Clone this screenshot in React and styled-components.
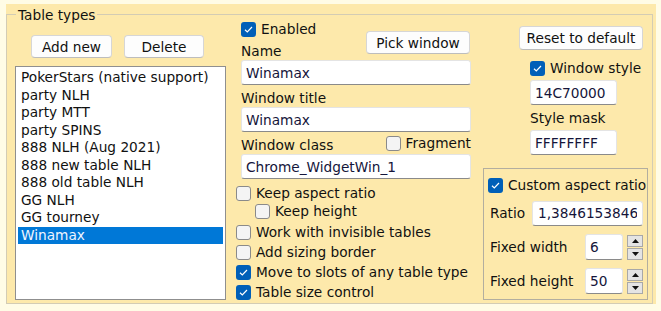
import styled, { createGlobalStyle } from "styled-components";

const GlobalStyle = createGlobalStyle`
  html, body {
    margin: 0;
    padding: 0;
    background: #fffce6;
  }
  body {
    font-family: "DejaVu Sans", Tahoma, sans-serif;
    font-size: 13.7px;
    color: #111;
  }
`;

const tableTypes = [
  "PokerStars (native support)",
  "party NLH",
  "party MTT",
  "party SPINS",
  "888 NLH (Aug 2021)",
  "888 new table NLH",
  "888 old table NLH",
  "GG NLH",
  "GG tourney",
  "Winamax",
];

const Check = ({ checked }) => (
  <Box $checked={checked}>
    {checked && (
      <svg width="15" height="15" viewBox="0 0 15 15">
        <path d="M4 7.8 L6.3 10 L11 5" fill="none" stroke="#fff" strokeWidth="1.2" />
      </svg>
    )}
  </Box>
);

const Spinner = () => (
  <Spin>
    <SpinBtn>
      <svg width="7" height="4" viewBox="0 0 7 4">
        <polygon points="0,4 7,4 3.5,0" fill="#111" />
      </svg>
    </SpinBtn>
    <SpinBtn>
      <svg width="7" height="4" viewBox="0 0 7 4">
        <polygon points="0,0 7,0 3.5,4" fill="#111" />
      </svg>
    </SpinBtn>
  </Spin>
);

const App = () => {
  return (
    <>
      <GlobalStyle />
      <Panel>
        <Frame>
          <Legend>Table types</Legend>

          <LeftCol>
            <ButtonRow>
              <Button $w={81}>Add new</Button>
              <Button $w={80}>Delete</Button>
            </ButtonRow>
            <ListBox>
              {tableTypes.map((t) => (
                <Item key={t} $selected={t === "Winamax"}>
                  {t}
                </Item>
              ))}
            </ListBox>
          </LeftCol>

          <MidCol>
            <Header>
              <div>
                <CheckRow $indent={5} $h={18}>
                  <Check checked />
                  Enabled
                </CheckRow>
                <Label>Name</Label>
              </div>
              <Button $w={104} $top={11}>Pick window</Button>
            </Header>
            <Field $w={230} value="Winamax" readOnly />
            <Label>Window title</Label>
            <Field $w={230} value="Winamax" readOnly />
            <SplitRow>
              <Label>Window class</Label>
              <CheckRow $h={22}>
                <Check />
                Fragment
              </CheckRow>
            </SplitRow>
            <Field $w={230} value="Chrome_WidgetWin_1" readOnly />
            <CheckRow $top={4}>
              <Check />
              Keep aspect ratio
            </CheckRow>
            <CheckRow $indent={19} $h={16}>
              <Check />
              Keep height
            </CheckRow>
            <CheckRow $top={3}>
              <Check />
              Work with invisible tables
            </CheckRow>
            <CheckRow>
              <Check />
              Add sizing border
            </CheckRow>
            <CheckRow>
              <Check checked />
              Move to slots of any table type
            </CheckRow>
            <CheckRow>
              <Check checked />
              Table size control
            </CheckRow>
          </MidCol>

          <RightCol>
            <Button $w={124} $h={24} $left={36}>Reset to default</Button>
            <CheckRow $indent={47} $top={8}>
              <Check checked />
              Window style
            </CheckRow>
            <Field $w={87} $left={47} $top={2} value="14C70000" readOnly />
            <Label $h={25} $left={47}>Style mask</Label>
            <Field $w={87} $left={47} value="FFFFFFFF" readOnly />

            <AspectBox>
              <CheckRow $indent={4} $h={18} $top={7}>
                <Check checked />
                Custom aspect ratio
              </CheckRow>
              <FormRow $top={7} $h={24}>
                <RowLabel $w={37}>Ratio</RowLabel>
                <Field $w={111} $pad={5} value="1,38461538461538" readOnly />
              </FormRow>
              <FormRow $top={9} $h={26}>
                <RowLabel $w={90}>Fixed width</RowLabel>
                <Field $w={38} $h={26} value="6" readOnly />
                <Spinner />
              </FormRow>
              <FormRow $top={8} $h={26}>
                <RowLabel $w={90}>Fixed height</RowLabel>
                <Field $w={38} $h={26} value="50" readOnly />
                <Spinner />
              </FormRow>
            </AspectBox>
          </RightCol>
        </Frame>
      </Panel>
    </>
  );
};

export default App;

const Panel = styled.div`
  margin: 4px 0 0 6px;
  width: 650px;
  height: 300px;
  box-sizing: border-box;
  padding: 10px 3px 0 0;
  background: #fde9ab;
`;

const Frame = styled.div`
  position: relative;
  height: 290px;
  box-sizing: border-box;
  border: 1px solid #d3ccb4;
  padding-left: 8px;
  display: flex;
`;

const Legend = styled.div`
  position: absolute;
  left: 9px;
  top: -10px;
  padding: 0 2px;
  line-height: 20px;
  background: #fde9ab;
`;

const LeftCol = styled.div`
  width: 211px;
  display: flex;
  flex-direction: column;
`;

const ButtonRow = styled.div`
  display: flex;
  gap: 12px;
  margin-top: 20px;
  padding-left: 16px;
`;

const Button = styled.button`
  width: ${(p) => p.$w}px;
  height: ${(p) => p.$h || 23}px;
  margin-top: ${(p) => p.$top || 0}px;
  margin-left: ${(p) => p.$left || 0}px;
  box-sizing: border-box;
  padding: 0;
  border: 1px solid #d6d6d6;
  border-bottom-color: #bdbdbd;
  border-radius: 4px;
  background: #fdfdfd;
  font: inherit;
  color: #111;
  flex-shrink: 0;
`;

const ListBox = styled.div`
  margin-top: 8px;
  height: 234px;
  box-sizing: border-box;
  border: 1px solid #8f8f8f;
  background: #fff;
  padding: 2px 2px 0;
`;

const Item = styled.div`
  line-height: 17.5px;
  padding-left: 3px;
  white-space: nowrap;
  background: ${(p) => (p.$selected ? "#0078d7" : "transparent")};
  color: ${(p) => (p.$selected ? "#eef5ff" : "#111")};
`;

const MidCol = styled.div`
  width: 235px;
  margin-left: 10px;
  padding-top: 5px;
  display: flex;
  flex-direction: column;
`;

const Header = styled.div`
  display: flex;
  justify-content: space-between;
  height: 40px;
  margin-right: 1px;
`;

const SplitRow = styled.div`
  display: flex;
  justify-content: space-between;
  align-items: flex-start;
`;

const Label = styled.div`
  height: ${(p) => p.$h || 22}px;
  box-sizing: border-box;
  padding-top: 5px;
  padding-left: ${(p) => (p.$left ?? 5)}px;
  line-height: 17px;
  white-space: nowrap;
`;

const Field = styled.input`
  width: ${(p) => p.$w}px;
  height: ${(p) => p.$h || 25}px;
  margin: ${(p) => p.$top || 0}px 0 0 ${(p) => (p.$left ?? 5)}px;
  box-sizing: border-box;
  padding: 0 ${(p) => p.$pad || 4}px;
  border: 1px solid #e4e4e4;
  border-bottom: 1px solid #8a8a8a;
  border-radius: 3px;
  background: #fff;
  font: inherit;
  color: #15153a;
  outline: none;
  flex-shrink: 0;
`;

const CheckRow = styled.div`
  display: flex;
  align-items: center;
  gap: 5px;
  height: ${(p) => p.$h || 20}px;
  margin-top: ${(p) => p.$top || 0}px;
  padding-left: ${(p) => p.$indent || 0}px;
  white-space: nowrap;
`;

const Box = styled.span`
  width: 15px;
  height: 15px;
  flex-shrink: 0;
  box-sizing: border-box;
  border-radius: 3px;
  display: flex;
  background: ${(p) => (p.$checked ? "#005fb8" : "#f4f4f4")};
  border: ${(p) => (p.$checked ? "none" : "1px solid #8a8a8a")};
`;

const RightCol = styled.div`
  width: 165px;
  margin-left: 12px;
  padding-top: 11px;
  display: flex;
  flex-direction: column;
`;

const AspectBox = styled.div`
  margin-top: 13px;
  height: 132px;
  box-sizing: border-box;
  border: 1px solid #b3ae9f;
  display: flex;
  flex-direction: column;
  overflow: hidden;
`;

const FormRow = styled.div`
  display: flex;
  align-items: center;
  height: ${(p) => p.$h}px;
  margin-top: ${(p) => p.$top || 0}px;
  padding-left: 6px;
`;

const RowLabel = styled.span`
  width: ${(p) => p.$w}px;
  flex-shrink: 0;
  white-space: nowrap;
`;

const Spin = styled.div`
  width: 16px;
  height: 25px;
  margin-left: 4px;
  display: flex;
  flex-direction: column;
  gap: 1px;
`;

const SpinBtn = styled.div`
  flex: 1;
  box-sizing: border-box;
  border: 1px solid #a8a8a8;
  background: #e4e4e4;
  display: flex;
  align-items: center;
  justify-content: center;
`;
